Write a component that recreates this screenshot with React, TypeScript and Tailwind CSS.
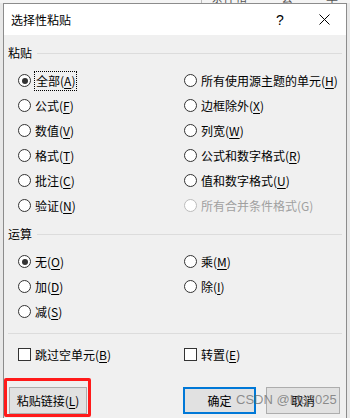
import React from "react";

const FONT = { fontFamily: '"Noto Sans CJK SC", "Microsoft YaHei", sans-serif' };

function Radio({ checked, disabled }: { checked?: boolean; disabled?: boolean }) {
  return (
    <span
      className={
        "w-[13px] h-[13px] rounded-full border bg-white flex items-center justify-center shrink-0 " +
        (disabled ? "border-[#bcbcbc]" : "border-[#333333]")
      }
    >
      {checked && <span className="w-[6px] h-[6px] rounded-full bg-[#333333]" />}
    </span>
  );
}

function Check() {
  return <span className="w-[13px] h-[13px] border border-[#333333] bg-white shrink-0" />;
}

function Label({ text, k, disabled, focus }: { text: string; k: string; disabled?: boolean; focus?: boolean }) {
  const inner = (
    <span className={"text-[12px] leading-[16px] whitespace-nowrap " + (disabled ? "text-[#a0a0a0]" : "text-black")}>
      {text}(
      {disabled ? k : <span className="underline underline-offset-[2px] decoration-[1px]">{k}</span>})
    </span>
  );
  if (focus) {
    return <span className="ml-[3px] px-[1px] py-[1px] border border-dotted border-black flex items-center">{inner}</span>;
  }
  return <span className="ml-[4px] flex items-center">{inner}</span>;
}

function RadioItem({ text, k, checked, disabled, focus }: { text: string; k: string; checked?: boolean; disabled?: boolean; focus?: boolean }) {
  return (
    <div className="h-[25px] flex items-center">
      <Radio checked={checked} disabled={disabled} />
      <Label text={text} k={k} disabled={disabled} focus={focus} />
    </div>
  );
}

function CheckItem({ text, k }: { text: string; k: string }) {
  return (
    <div className="h-[25px] flex items-center">
      <Check />
      <Label text={text} k={k} />
    </div>
  );
}

function GroupHeader({ title }: { title: string }) {
  return (
    <div className="h-[18px] flex items-center">
      <span className="text-[12px] leading-[16px] text-black">{title}</span>
      <span className="flex-1 h-px bg-[#dcdcdc] ml-[5px]" />
    </div>
  );
}

export default function App() {
  return (
    <div className="w-[350px] h-[418px] overflow-hidden bg-[#e8e8e8] flex flex-col" style={FONT}>
      {/* background strip (spreadsheet ribbon behind) */}
      <div className="h-[3px] overflow-hidden flex bg-[#f4f4f4] text-[12px] leading-[12px] text-[#555]">
        <span className="w-[203px] border-r border-[#bbb]" />
        <span className="ml-[9px] -mt-[9px]">条件格式</span>
        <span className="ml-[22px] -mt-[9px]">套用</span>
        <span className="ml-[21px] -mt-[9px]">单元</span>
      </div>
      <div className="flex-1 flex pl-[3px] pr-[3px]">
        <div className="flex-1 flex flex-col border-l border-t border-r border-[#8c8c8c] bg-[#f0f0f0] min-w-0">
          {/* title bar */}
          <div className="h-[31px] bg-white flex items-center shrink-0">
            <span className="pl-[7px] text-[12px] leading-[16px] text-black flex-1">选择性粘贴</span>
            <span className="w-[44px] flex justify-center text-[14px] leading-[16px] text-black" style={{ fontFamily: '"Liberation Sans", sans-serif' }}>?</span>
            <span className="w-[44px] flex justify-center">
              <svg width="11" height="11" viewBox="0 0 11 11">
                <path d="M0.5 0.5 L10.5 10.5 M10.5 0.5 L0.5 10.5" stroke="#000" strokeWidth="1" />
              </svg>
            </span>
          </div>

          {/* body */}
          <div className="flex-1 px-[4px] flex flex-col">
            <div className="mt-[9px]">
              <GroupHeader title="粘贴" />
            </div>
            <div className="mt-[6px] ml-[10px] grid grid-cols-[166px_1fr]">
              <RadioItem text="全部" k="A" checked focus />
              <RadioItem text="所有使用源主题的单元" k="H" />
              <RadioItem text="公式" k="F" />
              <RadioItem text="边框除外" k="X" />
              <RadioItem text="数值" k="V" />
              <RadioItem text="列宽" k="W" />
              <RadioItem text="格式" k="T" />
              <RadioItem text="公式和数字格式" k="R" />
              <RadioItem text="批注" k="C" />
              <RadioItem text="值和数字格式" k="U" />
              <RadioItem text="验证" k="N" />
              <RadioItem text="所有合并条件格式" k="G" disabled />
            </div>

            <div className="mt-[7px]">
              <GroupHeader title="运算" />
            </div>
            <div className="mt-[6px] ml-[10px] grid grid-cols-[166px_1fr]">
              <RadioItem text="无" k="O" checked />
              <RadioItem text="乘" k="M" />
              <RadioItem text="加" k="D" />
              <RadioItem text="除" k="I" />
              <RadioItem text="减" k="S" />
              <div />
            </div>

            <div className="mt-[9px] h-px bg-[#dcdcdc]" />

            <div className="mt-[8px] ml-[10px] grid grid-cols-[166px_1fr]">
              <CheckItem text="跳过空单元" k="B" />
              <CheckItem text="转置" k="E" />
            </div>

            {/* buttons */}
            <div className="mt-[20px] flex items-start relative">
              <div className="relative ml-[1px]">
                <button className="w-[78px] h-[27px] bg-[#e1e1e1] border border-[#adadad] text-[12px] leading-[16px] text-black flex items-center justify-center">
                  <span>
                    粘贴链接(<span className="underline underline-offset-[2px]">L</span>)
                  </span>
                </button>
                <span className="absolute left-[-5px] top-[-9px] w-[87px] h-[39px] border-[3px] border-[#ff1a1a] rounded-[2px] pointer-events-none" />
              </div>
              <button className="ml-[96px] w-[73px] h-[27px] bg-[#e1e1e1] border-2 border-[#0078d7] text-[12px] leading-[16px] text-black flex items-center justify-center">
                确定
              </button>
              <button className="ml-[10px] w-[74px] h-[27px] bg-[#e1e1e1] border border-[#adadad] text-[12px] leading-[16px] text-black flex items-center justify-center">
                取消
              </button>
              <span
                className="absolute left-[228px] top-[5px] text-[13px] leading-[16px] text-[rgba(110,110,110,0.75)] whitespace-nowrap pointer-events-none"
                style={{ fontFamily: '"Liberation Sans", Arial, sans-serif' }}
              >
                CSDN @Mq2025
              </span>
            </div>
          </div>
        </div>
      </div>
    </div>
  );
}
